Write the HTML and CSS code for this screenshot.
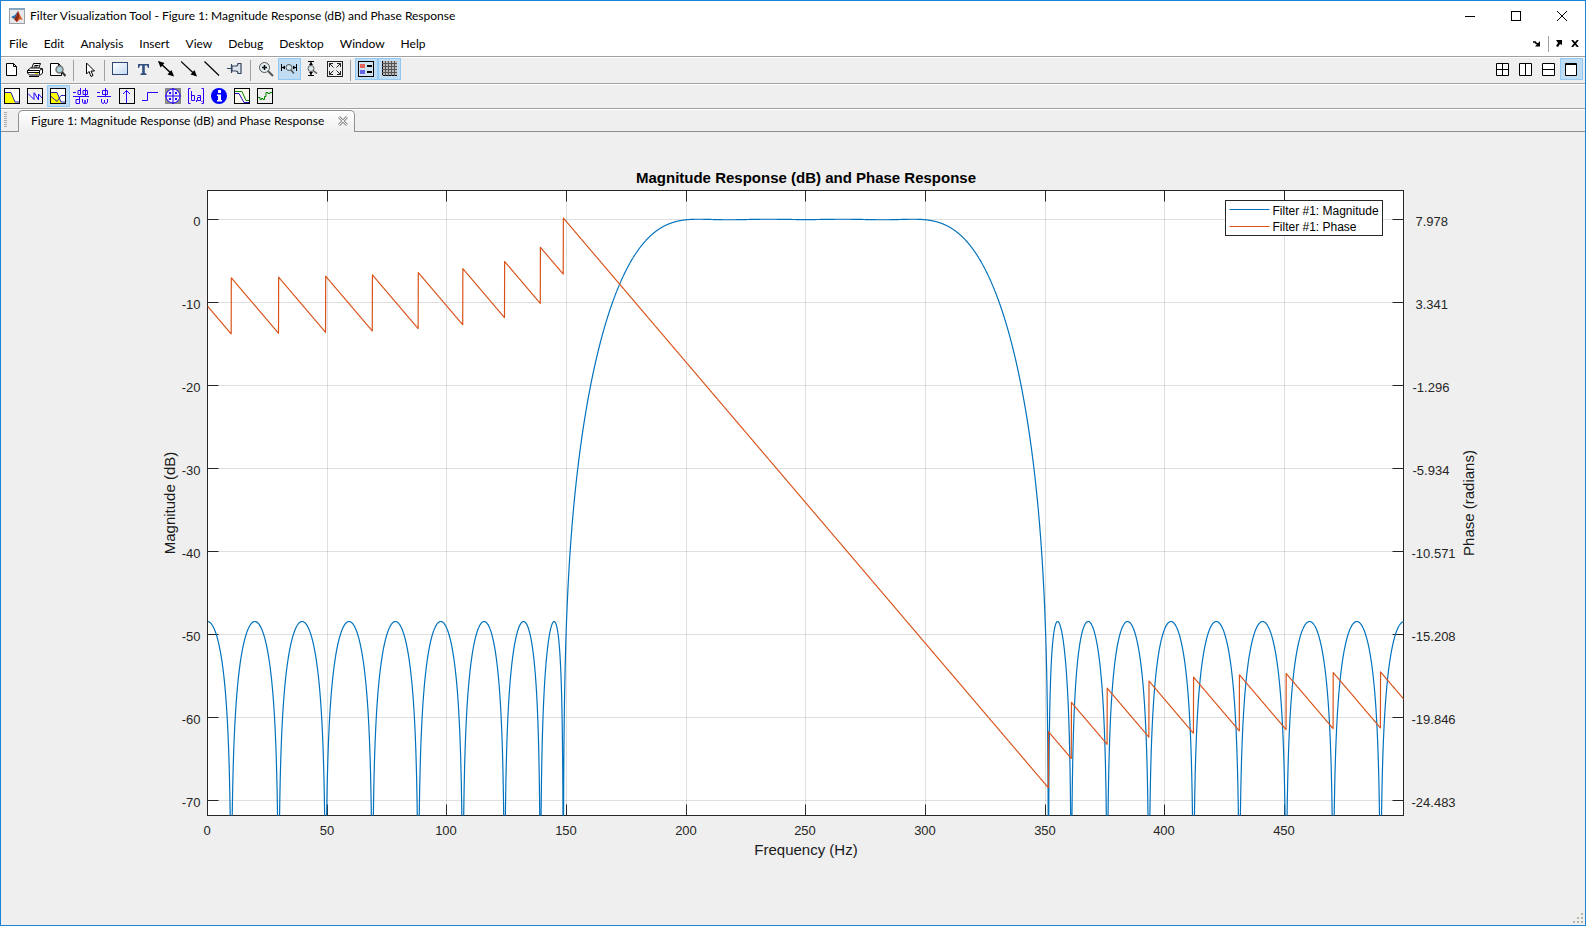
FILE: index.html
```html
<!DOCTYPE html>
<html lang="en">
<head>
<meta charset="utf-8">
<title>Filter Visualization Tool</title>
<link rel="stylesheet" href="styles.css">
</head>
<body>
<div class="window">
  <header class="titlebar">
    <svg class="app-icon" width="16" height="16" viewBox="0 0 16 16" aria-hidden="true">
      <rect x="0.5" y="0.5" width="15" height="15" fill="#e6e8ea" stroke="#9aa0a6"/>
      <path d="M0 0h16v2H0z" fill="#86a6bd"/>
      <path d="M2 9l4-2 3-4-2 7-2 1z" fill="#2c6fa8"/>
      <path d="M9 3c2 3 3 7 5 9-2-1-3-1-4 0l-2 2c-1-1-2-2-3-3 2-1 3-5 4-8z" fill="#d8541e"/>
      <path d="M9 3c1 2 1 4 1 6l-2 5c-1-1-2-2-3-3 2-1 3-5 4-8z" fill="#8b2a14"/>
    </svg>
    <h1 class="window-title">Filter Visualization Tool - Figure 1: Magnitude Response (dB) and Phase Response</h1>
    <div class="caption-buttons">
      <button class="caption-button" aria-label="Minimize"><svg width="10" height="10"><path d="M0 5.5h10" stroke="#000"/></svg></button>
      <button class="caption-button" aria-label="Maximize"><svg width="10" height="10"><rect x="0.5" y="0.5" width="9" height="9" fill="none" stroke="#000"/></svg></button>
      <button class="caption-button" aria-label="Close"><svg width="10" height="10"><path d="M0 0l10 10M10 0L0 10" stroke="#000"/></svg></button>
    </div>
  </header>

  <nav class="menubar">
    <button class="menu">File</button>
    <button class="menu">Edit</button>
    <button class="menu">Analysis</button>
    <button class="menu">Insert</button>
    <button class="menu">View</button>
    <button class="menu">Debug</button>
    <button class="menu">Desktop</button>
    <button class="menu">Window</button>
    <button class="menu">Help</button>
    <div class="dock">
      <button class="dock-button" aria-label="Dock"><svg width="8" height="6"><path d="M0 1h3M2 1.500l3.500 2" stroke="#000" stroke-width="1.500"/><path d="M7 0v5.500H2z"/></svg></button>
      <span class="dock-rule"></span>
      <button class="dock-button" aria-label="Undock"><svg width="8" height="7"><path d="M0 0h6v5L4 4 2 7 0 6l2-3z"/></svg></button>
      <button class="dock-button" aria-label="Close figure"><svg width="8" height="7"><path d="M1 0l6 7M7 0L1 7" stroke="#000" stroke-width="1.800"/></svg></button>
    </div>
  </nav>

  <div class="toolbar figure-toolbar">
    <button class="tool" aria-label="New"><svg width="16" height="16"><path d="M2.500 2.500h7l3 3v9h-10zM9.500 2.500v3h3" fill="#fff" stroke="#000"/></svg></button>
    <button class="tool" aria-label="Print"><svg width="16" height="16"><path d="M4.500 7.500l2-5h7l-2 5z" fill="#fff" stroke="#000"/><path d="M7.500 4.500h4M6.500 6h4" stroke="#000"/><path d="M0.500 9.500l3-2.500h9l3 1v4l-2 2h-11l-2-2z" fill="#fff" stroke="#000"/><path d="M0.500 9.500h12l3-2M12.500 9.500v4M2 15.500h10" fill="none" stroke="#000"/><path d="M0.500 11.500h12" stroke="#000"/><path d="M8 12.500h3" stroke="#e8d800" stroke-width="1"/></svg></button>
    <button class="tool" aria-label="Print preview"><svg width="16" height="16"><path d="M0.500 2.500h8l3 3v9h-11zM8.500 2.500v3h3" fill="#fff" stroke="#000"/><circle cx="9.500" cy="8.500" r="3.500" fill="#a9d2da" stroke="#777" stroke-width="1.500"/><path d="M12 11l3.500 4" stroke="#333" stroke-width="2"/></svg></button>
    <span class="separator"></span>
    <button class="tool" aria-label="Edit plot"><svg width="16" height="16"><path d="M5.500 2v11l2.500-2.500 2 5 2-1-2-4.500h3.500z" fill="#fff" stroke="#000"/></svg></button>
    <span class="separator"></span>
    <button class="tool" aria-label="Insert rectangle"><svg width="16" height="16"><defs><linearGradient id="sky" x2="1" y2="1"><stop stop-color="#fff"/><stop offset="1" stop-color="#c3daf2"/></linearGradient></defs><rect x="0.500" y="1.500" width="15" height="12" fill="url(#sky)" stroke="#2d4674"/></svg></button>
    <button class="tool" aria-label="Insert text"><svg width="16" height="16"><path d="M3 3h11v4h-1l-1-2.500H9.800V12l1.700.8V14h-6v-1.200l1.700-.8V4.500H5L4 7H3z" fill="#33507f"/></svg></button>
    <button class="tool" aria-label="Insert double arrow"><svg width="16" height="16"><path d="M1 1l14 13" stroke="#000" stroke-width="1.500"/><path d="M0 0l6.500 2-4 4.500zM16 15.500l-6.500-2 4-4.500z"/></svg></button>
    <button class="tool" aria-label="Insert arrow"><svg width="16" height="16"><path d="M0 0.500l14 13" stroke="#000" stroke-width="1.200"/><path d="M16 15.500l-6.500-2 4-4.500z"/></svg></button>
    <button class="tool" aria-label="Insert line"><svg width="16" height="16"><path d="M0.500 0.500l14.500 14" stroke="#000" stroke-width="1.200"/></svg></button>
    <button class="tool" aria-label="Pin"><svg width="16" height="16"><path d="M0 7.500h5M4.500 3v9M5 5h4c1 0 2-1 2-2.500h3v10h-3c0-1.500-1-2.500-2-2.500H5z" fill="#dfe5ec" stroke="#35465f" stroke-width="1.200"/></svg></button>
    <span class="separator"></span>
    <button class="tool" aria-label="Zoom in"><svg width="16" height="16"><circle cx="6.500" cy="6.500" r="5" fill="#e4eff3" stroke="#555"/><path d="M4 6.500h5M6.500 4v5" stroke="#111" stroke-width="1.500"/><path d="M10 10l5 5" stroke="#555" stroke-width="2"/></svg></button>
    <button class="tool is-on" aria-label="Zoom x"><svg width="16" height="16"><path d="M0.500 3v7M15.500 3v7M0 6.500h4M12 6.500h4" stroke="#000"/><path d="M1 6.500l3-2v4zM15 6.500l-3-2v4z"/><circle cx="8" cy="6.500" r="3" fill="#d4e6f0" stroke="#555"/><path d="M10 9l3 3.500" stroke="#555" stroke-width="1.500"/></svg></button>
    <button class="tool" aria-label="Zoom y"><svg width="16" height="16"><path d="M4 0.500h6M4 14.500h6M7 0v4M7 11v4" stroke="#000"/><path d="M7 1l2 3H5zM7 14l2-3H5z"/><circle cx="7" cy="7.500" r="3" fill="#dceaf0" stroke="#555"/><path d="M9 9.500l4 3" stroke="#555" stroke-width="1.500"/></svg></button>
    <button class="tool" aria-label="Full view"><svg width="16" height="16"><rect x="0.500" y="0.500" width="15" height="15" fill="#eee" stroke="#222"/><path d="M2.500 6V2.500H6M2.500 2.500l4 4M10 2.500h3.500V6M13.500 2.500l-4 4M2.500 10v3.500H6M2.500 13.500l4-4M13.500 10v3.500H10M13.500 13.500l-4-4" stroke="#222" fill="none"/></svg></button>
    <span class="separator"></span>
    <button class="tool is-on" aria-label="Legend"><svg width="16" height="16"><rect x="0.500" y="0.500" width="15" height="15" fill="#cfe2f2" stroke="#000"/><path d="M2 3h5v4H2z" fill="#e8625c"/><path d="M2 9h5v4H2z" fill="#6663e6"/><path d="M9 5h5M9 11h5" stroke="#000" stroke-width="2"/></svg></button>
    <button class="tool is-on" aria-label="Grid"><svg width="16" height="16"><path d="M1 0h15v15H1z" fill="#bbb"/><path d="M4.500 0v15M7.500 0v15M10.500 0v15M13.500 0v15M1 2.500h15M1 5.500h15M1 8.500h15M1 11.500h15" stroke="#555"/><path d="M1.500 0v14.500H16" fill="none" stroke="#000" stroke-dasharray="2 1"/></svg></button>
    <div class="tiling">
      <button class="tile" aria-label="Tile"><svg width="13" height="13"><path d="M0.500 0.500h12v12H0.500zM6.500 0v13M0 6.500h13" fill="#fff" stroke="#000"/></svg></button>
      <button class="tile" aria-label="Left right tile"><svg width="13" height="13"><path d="M0.500 0.500h12v12H0.500zM6.500 0v13" fill="#fff" stroke="#000"/></svg></button>
      <button class="tile" aria-label="Top bottom tile"><svg width="13" height="13"><path d="M0.500 0.500h12v12H0.500zM0 6.500h13" fill="#fff" stroke="#000"/></svg></button>
      <button class="tile is-on" aria-label="Maximize documents"><svg width="12" height="13"><path d="M0.500 0.500h11v12H0.500zM0 1.500h12" fill="#fff" stroke="#000"/></svg></button>
    </div>
  </div>

  <div class="toolbar analysis-toolbar">
    <button class="tool" aria-label="Magnitude response"><svg width="16" height="16"><rect x="0.500" y="0.500" width="15" height="15" fill="#fff" stroke="#000"/><path d="M1 5h6l4 9v1H1z" fill="#ff0"/><path d="M1 4.500h6l4 9.500h4" fill="none" stroke="#22a"/></svg></button>
    <button class="tool" aria-label="Phase response"><svg width="16" height="16"><rect x="0.500" y="0.500" width="15" height="15" fill="#f0f0f0" stroke="#000"/><path d="M1 5.500l6 6V4.500M7.500 5l4 7V6l3.500 4" fill="none" stroke="#20f"/></svg></button>
    <button class="tool is-on" aria-label="Magnitude and phase responses"><svg width="16" height="16"><rect x="0.500" y="0.500" width="15" height="15" fill="#fff" stroke="#000"/><path d="M1 5h6l4 9v1H1z" fill="#ff0"/><path d="M1 4.500h6l4 9.500h4M1 8.500l6 5 4-6h4" fill="none" stroke="#22a"/></svg></button>
    <button class="tool" aria-label="Group delay"><svg width="16" height="16" class="ink"><path d="M0 4.500h3M7.500 0v6.500H5v-4h2.500M10 2.500h4.500v4H10zM12.500 0v8M0 8.500h16M6.500 9v6.500H3v-4h3.500M9.500 11v3l1 1.500h1l.5-1.500v-2 2l.5 1.500h1l1-1.500v-3"/></svg></button>
    <button class="tool" aria-label="Phase delay"><svg width="16" height="16" class="ink"><path d="M1 4.500h3M6.500 2.500h5v4h-5zM9.500 0v8M1 8.500h14M5.500 11v3l1 1.500h1l1-1.500v-2 2l1 1.500h1l1-1.500v-3"/></svg></button>
    <button class="tool" aria-label="Impulse response"><svg width="16" height="16"><rect x="0.500" y="0.500" width="15" height="15" fill="#f0f0f0" stroke="#000"/><path d="M7.500 2v13M4 6l3.500-3.500L11 6" fill="none" stroke="#20f"/></svg></button>
    <button class="tool" aria-label="Step response"><svg width="16" height="16" class="ink"><path d="M0 12.500h5.500v-8H16"/></svg></button>
    <button class="tool" aria-label="Pole-zero plot"><svg width="16" height="16"><path d="M0 0h16v16H0z" fill="#888"/><circle cx="8" cy="8" r="7" fill="#eee" stroke="#20f"/><path d="M8 0v16M0 8h16M4 4l2 2M6 4L4 6M10 4l2 2M12 4l-2 2M4 10l2 2M6 10l-2 2M10 10l2 2M12 10l-2 2" stroke="#20f"/></svg></button>
    <button class="tool" aria-label="Filter coefficients"><svg width="16" height="16" class="ink"><path d="M2.500 0.500h-2v15h2M13.500 0.500h2v15h-2M3.500 3v9.500h3v-5h-3M8.500 12v2M12.500 12.500h-3v-3h3M9.500 7.500h3v5.500M14 13v1"/></svg></button>
    <button class="tool" aria-label="Filter information"><svg width="16" height="16"><circle cx="8" cy="8" r="8" fill="#00f"/><path d="M7 2h3v3H7zM6 6.500h4V12h1v1.500H6V12h1V8H6z" fill="#fff"/></svg></button>
    <button class="tool" aria-label="Magnitude estimate"><svg width="16" height="16"><rect x="0.500" y="0.500" width="15" height="15" fill="#fffbee" stroke="#000"/><path d="M1 3.500h7l4 9h3" fill="none" stroke="#080"/><path d="M1 5.500h4l5 9h5" fill="none" stroke="#20c"/></svg></button>
    <button class="tool" aria-label="Round-off noise"><svg width="16" height="16"><rect x="0.500" y="0.500" width="15" height="15" fill="#eee" stroke="#000"/><path d="M1 9.500h2v2h1.500v-1H6v1h1.500v-3H9v-4h2v1h2v-1h2" fill="none" stroke="#080"/></svg></button>
  </div>

  <div class="tabstrip">
    <span class="grip"></span>
    <div class="tab">
      <span class="tab-label">Figure 1: Magnitude Response (dB) and Phase Response</span>
      <button class="tab-close" aria-label="Close tab"><svg width="10" height="10"><path d="M1 1l8 8M9 1L1 9" stroke="#999" stroke-width="3"/><path d="M1 1l8 8M9 1L1 9" stroke="#eee"/></svg></button>
    </div>
  </div>

  <main class="figure">
    <svg id="plot" class="plot" role="img" aria-label="Magnitude and phase response"></svg>
    <svg class="size-grip" width="10" height="10" aria-hidden="true"><path d="M8 0h2v2H8zM4 4h2v2H4zM8 4h2v2H8zM0 8h2v2H0zM4 8h2v2H4zM8 8h2v2H8z" fill="#b8b4a2"/></svg>
  </main>
</div>
<script src="plot.js"></script>
</body>
</html>
```
FILE: styles.css
```css
* { box-sizing: border-box; }

body {
  margin: 0;
  font: 12px/16px Lato, "Noto Sans", sans-serif;
  color: #000;
}

button {
  display: flex;
  align-items: center;
  justify-content: center;
  margin: 0;
  padding: 0;
  border: 0;
  background: none;
  font: inherit;
  color: inherit;
}

svg { display: block; }

.window {
  display: flex;
  flex-direction: column;
  height: 100vh;
  border: 1px solid #1883d7;
  background: #efefef;
}

.titlebar {
  display: flex;
  align-items: center;
  height: 29px;
  padding-left: 8px;
  background: #fff;
}

.window-title {
  flex: 1;
  margin: 0 0 0 5px;
  font-size: 12px;
  font-weight: 400;
  white-space: nowrap;
}

.caption-buttons { display: flex; }
.caption-button { width: 46px; height: 28px; }

.menubar {
  display: flex;
  align-items: center;
  height: 27px;
  padding: 1px 0 0 8px;
  gap: 16px;
  border-bottom: 1px solid #a0a0a0;
  background: #fff;
}

.dock {
  display: flex;
  align-items: center;
  gap: 7px;
  margin-left: auto;
  padding-right: 6px;
}
.dock-rule { width: 1px; height: 16px; background: #a0a0a0; }

.toolbar {
  display: flex;
  align-items: flex-start;
  border-top: 1px solid #fff;
  border-bottom: 1px solid #a0a0a0;
}
.figure-toolbar { height: 27px; }
.analysis-toolbar { height: 25px; }

.tool, .tile {
  align-items: flex-start;
  justify-content: flex-start;
  width: 23px;
  height: 22px;
  border: 1px solid transparent;
}
.tool { padding: 2px; }
.tile { padding: 4px; }
.tool.is-on, .tile.is-on { border-color: #90c8f6; background: #c0dcf3; }
.tiling { display: flex; margin-left: auto; padding-right: 2px; }

.separator { width: 1px; height: 21px; margin: 2px 4px 0 3px; background: #a0a0a0; }

.ink { fill: none; stroke: #30f; }

.tabstrip {
  display: flex;
  align-items: stretch;
  height: 23px;
  padding-left: 3px;
  border-top: 1px solid #fff;
  border-bottom: 1px solid #909090;
}
.grip {
  width: 3px;
  margin: 2px 11px 3px 0;
  background: repeating-linear-gradient(#aaa 0 1px, transparent 1px 2px);
}
.tab {
  display: flex;
  align-items: center;
  gap: 14px;
  height: 22px;
  padding: 0 6px 2px 12px;
  border: 1px solid #909090;
  border-bottom: 0;
  border-radius: 5px 5px 0 0;
  background: linear-gradient(#fff, #efefef);
}
.tab-label { white-space: nowrap; }

.figure { position: relative; flex: 1; min-height: 0; }
.plot { width: 100%; height: 100%; font-family: "Liberation Sans", Arial, sans-serif; }
.size-grip { position: absolute; right: 2px; bottom: 2px; }

.axes-area { fill: #fff; }
.axes-box, .tick { fill: none; stroke: #262626; }
.grid-line { stroke: #262626; stroke-opacity: 0.15; }
.magnitude, .phase { fill: none; stroke-linejoin: round; stroke-width: 1.2; }
.magnitude { stroke: #0072bd; }
.phase { stroke: #d95319; }
.tick-label { font-size: 13px; fill: #262626; }
.axis-label { font-size: 15px; fill: #1a1a1a; }
.axes-title { font-size: 15px; font-weight: 700; }
.legend-box { fill: #fff; stroke: #262626; }
.legend-label { font-size: 12px; }
```
FILE: plot.js
```js
// Linear-phase FIR band-pass: order 50, fs 1000 Hz,
// stop 0-150 / pass 200-300 / stop 350-500 Hz, equal weights.
const ORDER = 50, FS = 1000, TERMS = 13;

function solve(m, rhs) {
  const n = rhs.length;
  for (let c = 0; c < n; c++) {
    let p = c;
    for (let r = c + 1; r < n; r++) if (Math.abs(m[r][c]) > Math.abs(m[p][c])) p = r;
    [m[c], m[p]] = [m[p], m[c]];
    [rhs[c], rhs[p]] = [rhs[p], rhs[c]];
    for (let r = c + 1; r < n; r++) {
      const k = m[r][c] / m[c][c];
      for (let j = c; j < n; j++) m[r][j] -= k * m[c][j];
      rhs[r] -= k * rhs[c];
    }
  }
  for (let r = n - 1; r >= 0; r--) {
    for (let j = r + 1; j < n; j++) rhs[r] -= m[r][j] * rhs[j];
    rhs[r] /= m[r][r];
  }
  return rhs;
}

function amplitude(coef, f) {
  const w = 2 * Math.PI * f / FS;
  let sum = 0;
  for (let k = 0; k < TERMS; k++) sum += coef[k] * Math.cos(2 * k * w);
  return sum;
}

// Remez exchange; the response is symmetric about 250 Hz.
function design() {
  const grid = [];
  for (let i = 0; i <= 1500; i++) grid.push({ f: i / 10, d: 0, band: 0 });
  for (let i = 2000; i <= 2500; i++) grid.push({ f: i / 10, d: 1, band: 1 });
  const count = TERMS + 1;
  let ext = [];
  for (let i = 0; i < count; i++) ext.push(grid[Math.round(i * (grid.length - 1) / (count - 1))]);
  let coef;
  for (let pass = 0; pass < 25; pass++) {
    const m = ext.map((p, i) => {
      const row = [];
      for (let k = 0; k < TERMS; k++) row.push(Math.cos(4 * Math.PI * k * p.f / FS));
      row.push(i % 2 ? -1 : 1);
      return row;
    });
    coef = solve(m, ext.map(p => p.d));
    const err = grid.map(p => amplitude(coef, p.f) - p.d);
    const found = [];
    grid.forEach((p, i) => {
      const e = err[i], s = Math.sign(e);
      const l = i > 0 && grid[i - 1].band === p.band ? err[i - 1] * s : -Infinity;
      const r = i < grid.length - 1 && grid[i + 1].band === p.band ? err[i + 1] * s : -Infinity;
      if (e * s < l || e * s <= r) return;
      const last = found[found.length - 1];
      if (last && Math.sign(last.e) === s) {
        if (Math.abs(e) > Math.abs(last.e)) found[found.length - 1] = { p, e };
      } else found.push({ p, e });
    });
    while (found.length > count) {
      if (Math.abs(found[0].e) < Math.abs(found[found.length - 1].e)) found.shift(); else found.pop();
    }
    if (found.length < count) break;
    ext = found.map(q => q.p);
  }
  return coef;
}

const coef = design();
const samples = [];
let turns = 0, previous = amplitude(coef, 0);
for (let i = 0; i < 8192; i++) {
  const f = i * 500 / 8192;
  const a = amplitude(coef, f);
  if (a * previous < 0) turns++;
  previous = a;
  samples.push({
    f,
    db: 20 * Math.log10(Math.max(Math.abs(a), 1e-9)),
    phase: Math.PI - ORDER * Math.PI * f / FS + turns * Math.PI
  });
}

function draw() {
  const svg = document.getElementById('plot');
  const W = svg.clientWidth, H = svg.clientHeight;
  const left = Math.round(W * 0.1304) - 0.5, right = Math.round(W * 0.8855) - 0.5;
  const top = Math.round(H * 0.0744) - 0.5, bottom = Math.round(H * 0.8625) - 0.5;
  const zero = top + (bottom - top) * 0.0464, perDb = (bottom - top) / 75.3;
  const X = f => left + f * (right - left) / 499.7;
  const Y = db => zero - db * perDb;
  const YP = p => Y((p - 7.978) / 0.46373);
  const snap = v => Math.floor(v) + 0.5;
  const out = [];
  const line = (cls, x1, y1, x2, y2) => out.push(`<path class="${cls}" d="M${x1} ${y1}L${x2} ${y2}"/>`);
  const text = (cls, x, y, anchor, s, rot) => out.push(
    `<text class="${cls}" x="${x}" y="${y}" text-anchor="${anchor}"${rot ? ` transform="rotate(-90 ${x} ${y})"` : ''}>${s}</text>`);

  out.push(`<clipPath id="axes-clip"><rect x="${left}" y="${top}" width="${right - left}" height="${bottom - top}"/></clipPath>`);
  out.push(`<rect class="axes-area" x="${left}" y="${top}" width="${right - left}" height="${bottom - top}"/>`);
  const phases = ['7.978', '3.341', '-1.296', '-5.934', '-10.571', '-15.208', '-19.846', '-24.483'];
  for (let f = 50; f < 500; f += 50) {
    const x = snap(X(f));
    line('grid-line', x, top, x, bottom);
    line('tick', x, top, x, top + 11);
    line('tick', x, bottom, x, bottom - 11);
  }
  phases.forEach((label, i) => {
    const y = snap(Y(-10 * i));
    line('grid-line', left, y, right, y);
    line('tick', left, y, left + 11, y);
    line('tick', right, y, right - 11, y);
    text('tick-label', left - 7, y + 6, 'end', -10 * i || 0);
    text('tick-label', right + (i > 3 ? 8 : i > 1 ? 9 : 12), y + 6, 'start', label);
  });
  for (let f = 0; f < 500; f += 50) text('tick-label', Math.floor(X(f)), bottom + 19, 'middle', f);
  out.push(`<rect class="axes-box" x="${left}" y="${top}" width="${right - left}" height="${bottom - top}"/>`);

  const path = (key, map) => samples.map((s, i) =>
    (i ? 'L' : 'M') + X(s.f).toFixed(2) + ' ' + Math.min(map(s[key]), H + 400).toFixed(2)).join('');
  out.push(`<g clip-path="url(#axes-clip)"><path class="magnitude" d="${path('db', Y)}"/><path class="phase" d="${path('phase', YP)}"/></g>`);

  const mid = Math.round((left + right) / 2);
  text('axes-title', mid, top - 8, 'middle', 'Magnitude Response (dB) and Phase Response');
  text('axis-label', mid, bottom + 39, 'middle', 'Frequency (Hz)');
  const centre = Math.round((top + bottom) / 2);
  text('axis-label', left - 33, centre, 'middle', 'Magnitude (dB)', true);
  text('axis-label', right + 70, centre, 'middle', 'Phase (radians)', true);

  const lx = right - 178, ly = top + 10;
  out.push(`<rect class="legend-box" x="${lx}" y="${ly}" width="157" height="35"/>`);
  line('magnitude', lx + 4, ly + 9, lx + 44, ly + 9);
  line('phase', lx + 4, ly + 26, lx + 44, ly + 26);
  text('legend-label', lx + 47, ly + 14, 'start', 'Filter #1: Magnitude');
  text('legend-label', lx + 47, ly + 30, 'start', 'Filter #1: Phase');
  svg.innerHTML = out.join('');
}

draw();
addEventListener('resize', draw);
```
